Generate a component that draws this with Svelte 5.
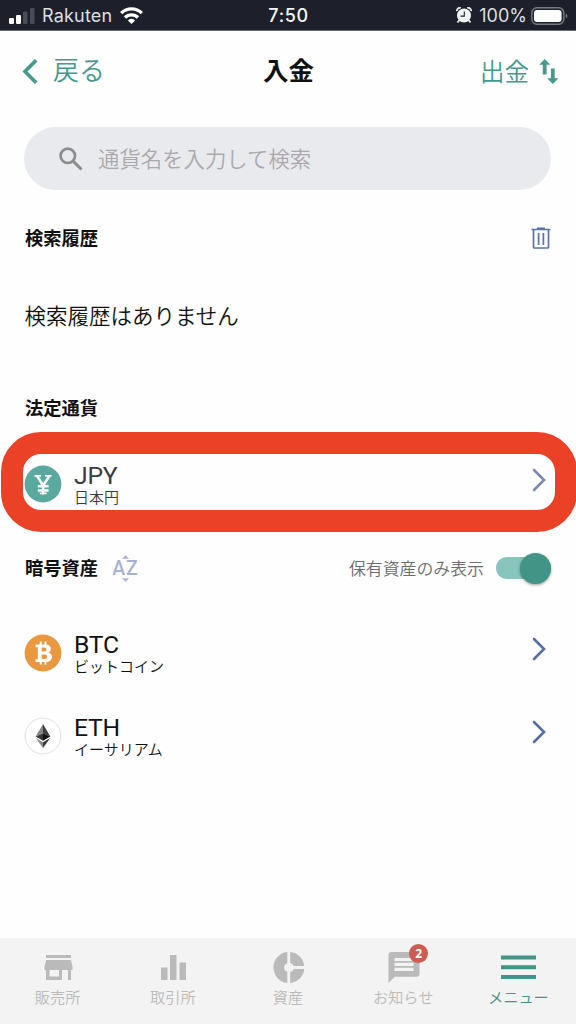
<script lang="ts">
	type Coin = { code: string; name: string; highlighted?: boolean };

	const fiat: Coin[] = [{ code: 'JPY', name: '日本円', highlighted: true }];
	const crypto: Coin[] = [
		{ code: 'BTC', name: 'ビットコイン' },
		{ code: 'ETH', name: 'イーサリアム' }
	];

	const tabs = [
		{ id: 'shop', label: '販売所' },
		{ id: 'exchange', label: '取引所' },
		{ id: 'assets', label: '資産' },
		{ id: 'news', label: 'お知らせ', badge: 2 },
		{ id: 'menu', label: 'メニュー' }
	];

	let active = $state('menu');
	let ownedOnly = $state(true);
	let query = $state('');
</script>

{#snippet coinRow(coin: Coin)}
	<div class="coin" class:highlighted={coin.highlighted}>
		<svg class="coin-icon" viewBox="0 0 38 38">
			{#if coin.code === 'JPY'}
				<circle cx="19" cy="19" r="18.4" fill="#59a99e" />
				<path d="M13 11l6.2 9.5L25.4 11M19.2 20v9.200M13.8 21.200h10.800M13.8 25.400h10.800" fill="none" stroke="#fff" stroke-width="2.5" />
				<path d="M10.5 10.900h6.500M21.200 10.900h6.300M15.800 28.400h6.800" stroke="#fff" stroke-width="1.800" />
			{:else if coin.code === 'BTC'}
				<circle cx="19" cy="19" r="18.4" fill="#e9983f" />
				<path d="M11.5 10.500h9.800c6.600 0 7 6.700 2.900 8 5.700 1.200 5.200 9.500-2.400 9.500H11.500v-2.800h2.300V13.300h-2.300zM17.700 13.500v4h2.500c3 0 3-4 0-4zM17.700 20.500v4.500h3c3.400 0 3.400-4.500 0-4.500z" fill="#fff" fill-rule="evenodd" />
				<path d="M16.800 7.500v4M21.500 7.500v4M16.800 27v3.500M21.500 27v3.500" stroke="#fff" stroke-width="2.100" />
			{:else}
				<circle cx="19" cy="19" r="17.900" fill="#fff" stroke="#e2e2e4" />
				<path d="M19 7l-7.300 12.400L19 16.200z" fill="#858585" />
				<path d="M19 7l7.300 12.400L19 16.200z" fill="#3c3c3c" />
				<path d="M11.700 19.400L19 16.200v7.500z" fill="#3a3a3a" />
				<path d="M26.300 19.400L19 16.200v7.500z" fill="#111" />
				<path d="M11.700 20.900l7.300 4.300V31z" fill="#8a8a8a" />
				<path d="M26.300 20.900L19 25.200V31z" fill="#3c3c3c" />
			{/if}
		</svg>
		<div class="coin-text">
			<span class="code">{coin.code}</span>
			<span class="name">{coin.name}</span>
		</div>
		<svg class="chevron" viewBox="0 0 14 24" width="14" height="24">
			<path d="M2 2l10 10L2 22" fill="none" stroke="currentColor" stroke-width="2.600" stroke-linecap="round" />
		</svg>
	</div>
{/snippet}

<div class="screen">
	<div class="status">
		<div class="carrier">
			<svg width="26" height="16" viewBox="0 0 26 16">
				<rect x="0" y="10" width="5" height="6" rx="1.300" fill="#fff" />
				<rect x="7" y="7" width="5" height="9" rx="1.300" fill="#fff" />
				<rect x="14" y="3.500" width="4.500" height="12.500" rx="1.300" fill="#4a4d57" />
				<rect x="21" y="0" width="4.500" height="16" rx="1.300" fill="#4a4d57" />
			</svg>
			<span>Rakuten</span>
			<svg width="23" height="17" viewBox="0 0 23 17" fill="none" stroke="#fff" stroke-width="3.300">
				<path d="M1.200 6.200a14.600 14.600 0 0 1 20.600 0" />
				<path d="M5 10.500a9.200 9.200 0 0 1 13 0" />
				<path d="M11.500 17l-3.600-3.600a4.900 4.900 0 0 1 7.200 0z" fill="#fff" stroke="none" />
			</svg>
		</div>
		<span class="time">7:50</span>
		<div class="battery">
			<svg width="16" height="17" viewBox="0 0 16 17">
				<path d="M3.500 13l-2 2.500M12.500 13l2 2.500" stroke="#e6e6e8" stroke-width="2" />
				<path d="M.9 4.200A3 3 0 0 1 4.800 1M15.100 4.200A3 3 0 0 0 11.200 1" fill="none" stroke="#e6e6e8" stroke-width="1.800" />
				<circle cx="8" cy="8.500" r="7" fill="#f2f2f2" />
				<path d="M8.300 4.500v4.600H4.500" fill="none" stroke="#1d202b" stroke-width="1.100" />
			</svg>
			<span>100%</span>
			<svg width="37" height="18" viewBox="0 0 37 18">
				<rect x=".8" y=".8" width="32" height="16.400" rx="5" fill="none" stroke="#777a82" stroke-width="1.400" />
				<rect x="3" y="3" width="27.600" height="12" rx="3" fill="#fff" />
				<path d="M34.800 6.500c2 .8 2 4.200 0 5z" fill="#777a82" />
			</svg>
		</div>
	</div>

	<header>
		<button class="back">
			<svg width="16" height="25" viewBox="0 0 16 25">
				<path d="M14.200 1.200L3 12.500l11.200 11.300" fill="none" stroke="currentColor" stroke-width="3.600" />
			</svg>
			<span>戻る</span>
		</button>
		<h1>入金</h1>
		<button class="withdraw">
			<span>出金</span>
			<svg width="20" height="25" viewBox="0 0 20 25" fill="currentColor">
				<path d="M5.700 0l5.500 5.700H7.600V15.500H3.800V5.700H.2z" />
				<path d="M13.800 25l-5.600-5.700h3.700V9.500h3.800v9.800h3.700z" />
			</svg>
		</button>
	</header>

	<label class="search">
		<svg width="24" height="24" viewBox="0 0 24 24" fill="none" stroke="#8c8c8c" stroke-width="2.700">
			<circle cx="8.800" cy="8.800" r="7.200" />
			<path d="M14 14l8.500 8.500" stroke-width="3" />
		</svg>
		<input type="text" placeholder="通貨名を入力して検索" bind:value={query} />
	</label>

	<div class="heading history">
		<h2>検索履歴</h2>
		<svg width="20" height="23" viewBox="0 0 20 23" fill="none" stroke="#5a73a8">
			<path d="M.5 2.500h19M6 1.200h8" stroke-width="1.600" />
			<path d="M2.500 3v17a1 1 0 0 0 1 1h13a1 1 0 0 0 1-1V3" stroke-width="1.700" />
			<path d="M7.600 6v12M12.400 6v12" stroke-width="1.700" />
		</svg>
	</div>
	<p class="empty">検索履歴はありません</p>

	<div class="heading fiat">
		<h2>法定通貨</h2>
	</div>
	{#each fiat as coin}
		{@render coinRow(coin)}
	{/each}

	<div class="heading crypto">
		<h2>暗号資産</h2>
		<div class="sort">
			<svg width="7" height="4" viewBox="0 0 8 4"><path d="M4 0l4 4H0z" fill="currentColor" /></svg>
			<span>AZ</span>
			<svg width="7" height="4" viewBox="0 0 8 4"><path d="M4 4l4-4H0z" fill="currentColor" /></svg>
		</div>
		<span class="owned">保有資産のみ表示</span>
		<button class="toggle" class:on={ownedOnly} aria-label="保有資産のみ表示" onclick={() => (ownedOnly = !ownedOnly)}>
			<span class="knob"></span>
		</button>
	</div>
	{#each crypto as coin}
		{@render coinRow(coin)}
	{/each}

	<nav>
		{#each tabs as tab}
			<button class="tab" class:active={active === tab.id} onclick={() => (active = tab.id)}>
				<span class="tab-icon">
					<svg width="36" height="32" viewBox="0 0 36 32" fill="currentColor">
						{#if tab.id === 'shop'}
							<path d="M6 3h25v3H6zM6 8h25l1.500 7v3H31v10h-3V18h-6v10H6V18H4.500v-3zM9.500 18v6.500H19V18z" fill-rule="evenodd" />
						{:else if tab.id === 'exchange'}
							<path d="M6 15.500h6.500V28H6zM15 3h6.500v25H15zM24.500 10.500H31V28h-6.500z" />
						{:else if tab.id === 'assets'}
							<path d="M17.300 0v11.200a4.500 4.500 0 0 0 0 8.600V31A15.600 15.600 0 0 1 17.300 0zM20.200 0A15.600 15.600 0 0 1 34.300 14H23.800a4.500 4.500 0 0 0-3.600-3zM20.200 31A15.600 15.600 0 0 0 34.300 17H23.800a4.500 4.500 0 0 1-3.600 3z" />
						{:else if tab.id === 'news'}
							<path d="M6.500 0h25a3 3 0 0 1 3 3v18.700a3 3 0 0 1-3 3H9.700L3.500 31V3a3 3 0 0 1 3-3z" />
							<path d="M9.500 7.500h19M9.500 12.400h19M9.500 17.300h19" stroke="#f3f3f3" stroke-width="3.200" />
						{:else}
							<path d="M1 3.500h35v4H1zM1 13.200h35v4H1zM1 22.900h35v4H1z" />
						{/if}
					</svg>
					{#if tab.badge}
						<span class="badge">{tab.badge}</span>
					{/if}
				</span>
				<span class="tab-label">{tab.label}</span>
			</button>
		{/each}
	</nav>
</div>

<style>
	:global(body) {
		background: #fff;
	}

	.screen {
		display: flex;
		flex-direction: column;
		width: 576px;
		height: 1024px;
		overflow: hidden;
		box-sizing: border-box;
		background: #fefefe;
		color: #111;
		font-family: Roboto, 'Noto Sans CJK JP', sans-serif;
	}

	button {
		padding: 0;
		border: 0;
		background: none;
		color: inherit;
		font: inherit;
	}

	h1, h2, p {
		margin: 0;
	}

	.status {
		display: grid;
		grid-template-columns: 1fr auto 1fr;
		align-items: center;
		flex: none;
		height: 31px;
		box-sizing: border-box;
		padding: 1px 8px 0 9px;
		border-bottom: 1px solid #6b6d74;
		background: #1d202b;
		color: #dedee1;
		font: 18px/1 Inter, sans-serif;
	}

	.carrier, .battery {
		display: flex;
		align-items: center;
	}
	.carrier span {
		margin: 0 8px 0 7px;
		letter-spacing: 0.2px;
	}
	.battery {
		justify-content: flex-end;
	}
	.battery span {
		margin: 0 4px 0 7px;
	}
	.time {
		color: #f4f4f5;
		font-weight: 500;
		letter-spacing: 0.6px;
	}

	header {
		display: grid;
		grid-template-columns: 1fr auto 1fr;
		align-items: center;
		flex: none;
		height: 81px;
		padding: 0 17px 0 22px;
		font-size: 24.5px;
	}
	header button {
		display: flex;
		align-items: center;
		color: #45988c;
		font-weight: 350;
	}
	header span {
		padding-bottom: 3px;
	}
	.back {
		gap: 15px;
		font-size: 26px;
	}
	.back span {
		padding-bottom: 6px;
	}
	.withdraw {
		justify-self: end;
		gap: 10px;
	}
	h1 {
		padding: 0 4px 6px 0;
		font-size: 25.5px;
		font-weight: 700;
	}

	.search {
		display: flex;
		align-items: center;
		flex: none;
		gap: 15px;
		height: 63px;
		margin: 15px 25px 0 24px;
		padding-left: 35px;
		box-sizing: border-box;
		border-radius: 32px;
		background: #e9eaee;
	}
	.search input {
		flex: 1;
		padding: 0 0 2px;
		border: 0;
		outline: 0;
		background: none;
		font: 350 21.4px 'Noto Sans CJK JP', sans-serif;
	}
	.search input::placeholder {
		color: #a9a9ac;
	}

	.heading {
		display: flex;
		align-items: center;
		flex: none;
		height: 40px;
		padding: 0 25px;
	}
	h2 {
		padding-bottom: 2px;
		font-size: 18.3px;
		font-weight: 700;
	}
	.history {
		justify-content: space-between;
		margin-top: 28px;
	}
	.empty {
		flex: none;
		height: 40px;
		margin-top: 39px;
		padding-left: 24.5px;
		font-size: 21.5px;
		font-weight: 350;
		line-height: 40px;
	}
	.fiat {
		margin: 51px 0 14px;
	}
	.crypto {
		margin: 23px 0;
	}

	.sort {
		display: flex;
		flex-direction: column;
		align-items: center;
		margin-left: 14px;
		color: #a5b2d3;
	}
	.sort span {
		padding-top: 1px;
		font: 500 19.5px/18px Roboto, sans-serif;
		letter-spacing: 1px;
	}
	.owned {
		margin-left: auto;
		padding-bottom: 2px;
		color: #6c6c6c;
		font-size: 16.9px;
		font-weight: 350;
	}
	.toggle {
		display: flex;
		align-items: center;
		width: 55px;
		height: 22px;
		margin-left: 12px;
		border-radius: 11px;
		background: #ccc;
	}
	.toggle.on {
		justify-content: flex-end;
		background: #88c5bc;
	}
	.knob {
		width: 31px;
		height: 31px;
		border-radius: 50%;
		background: #429487;
		box-shadow: 0 1px 3px rgba(0, 0, 0, 0.4);
	}

	.coin {
		position: relative;
		display: flex;
		align-items: center;
		flex: none;
		height: 83px;
		padding: 0 30px 0 24px;
		box-sizing: border-box;
	}
	/* attention ring, drawn past the row on every side */
	.highlighted::after {
		content: '';
		position: absolute;
		inset: -10px -1px -7px 1px;
		border: 22px solid #eb4127;
		border-radius: 40px;
	}
	.highlighted .coin-text {
		color: #3b3b3b;
	}
	.highlighted .chevron {
		color: #7b8bb8;
	}
	.coin-icon {
		width: 38px;
		height: 38px;
	}
	.coin-text {
		display: flex;
		flex-direction: column;
		flex: 1;
		margin-left: 12px;
		padding-top: 2px;
	}
	.code {
		font-size: 24.7px;
		letter-spacing: -0.2px;
		line-height: 27px;
	}
	.name {
		font-size: 15px;
		font-weight: 350;
		line-height: 18px;
	}
	.chevron {
		margin-bottom: 7px;
		color: #566ea6;
	}

	nav {
		display: grid;
		grid-template-columns: repeat(5, 1fr);
		flex: none;
		height: 86px;
		margin-top: auto;
		background: #f3f3f3;
	}
	.tab {
		display: flex;
		flex-direction: column;
		align-items: center;
		padding-top: 14px;
		color: #bababa;
	}
	.tab.active {
		color: #429487;
	}
	.tab-icon {
		position: relative;
		height: 32px;
	}
	.badge {
		position: absolute;
		top: -8px;
		right: -7px;
		width: 19px;
		height: 19px;
		border-radius: 50%;
		background: #cc5b50;
		color: #fff;
		font: 700 12px/20px 'Open Sans', sans-serif;
		text-align: center;
	}
	.tab-label {
		font-size: 15.2px;
		font-weight: 350;
		line-height: 28px;
	}
</style>
